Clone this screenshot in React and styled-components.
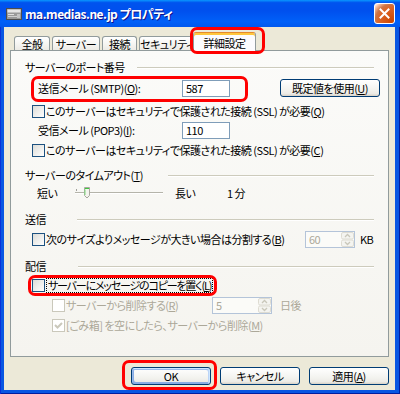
import React from 'react';
import styled, { createGlobalStyle, css } from 'styled-components';

const GlobalStyle = createGlobalStyle`
  html, body { margin: 0; padding: 0; background: #ffffff; }
  body {
    font-family: "Noto Sans CJK JP", "Noto Sans", sans-serif;
    font-size: 11px;
    line-height: 14px;
    letter-spacing: -0.5px;
    color: #000000;
    font-feature-settings: "palt";
  }
  * { box-sizing: border-box; }
`;

const Window = styled.div`
  width: 400px;
  height: 394px;
  display: flex;
  flex-direction: column;
  background: #0856e2;
  box-shadow: inset 1px 0 #0831d9, inset -1px 0 #001ea0, inset 0 -1px #001ea0;
  overflow: hidden;
`;

const TitleBar = styled.div`
  flex: 0 0 27px;
  display: flex;
  align-items: center;
  padding: 0 5px 0 6px;
  background: linear-gradient(180deg, #0997ff 0%, #0053ee 10%, #0050ee 40%, #0060f8 80%, #0058ee 100%);
`;

const Title = styled.span`
  flex: 1;
  margin-left: 3px;
  color: #ffffff;
  font-weight: 700;
  font-size: 12px;
  letter-spacing: -0.5px;
  white-space: nowrap;
  text-shadow: 1px 1px #0f1089;
`;

const CloseButton = styled.div`
  width: 21px;
  height: 21px;
  border: 1px solid #ffffff;
  border-radius: 3px;
  display: flex;
  align-items: center;
  justify-content: center;
  background: radial-gradient(circle at 90% 90%, #cc4600 0, #dc6527 55%, #cd7546 70%, #ffccb2 90%, #fff 100%);
`;

const Glyph = styled.svg`
  display: block;
  flex-shrink: 0;
`;

const Body = styled.div`
  flex: 1;
  margin: 0 5px 4px 4px;
  background: #ece9d8;
  display: flex;
  flex-direction: column;
  padding: 5px 6px 0 6px;
`;

const TabStrip = styled.div`
  flex: 0 0 18px;
  display: flex;
  align-items: flex-end;
  padding-left: 4px;
  position: relative;
  z-index: 2;
`;

const Tab = styled.div`
  width: ${p => p.$w}px;
  height: ${p => (p.$active ? 19 : 14)}px;
  margin-right: ${p => (p.$active ? 0 : 2)}px;
  margin-bottom: ${p => (p.$active ? -1 : 0)}px;
  flex-shrink: 0;
  border: 1px solid #919b9c;
  border-bottom: none;
  border-radius: 3px 3px 0 0;
  background: linear-gradient(180deg, #ffffff 0%, #f7f7f4 45%, #ecebe5 100%);
  display: flex;
  align-items: center;
  justify-content: center;
  white-space: nowrap;
  ${p =>
    p.$active &&
    css`
      border-top: 1px solid #e68b2c;
      box-shadow: inset 0 2px #ffc73c;
      background: #fcfcfe;
      padding-top: 2px;
    `}
`;

const ActiveTabSlot = styled.span`
  margin-left: -4px;
  display: flex;
  align-items: flex-end;
`;

const Panel = styled.div`
  flex: 0 0 307px;
  border: 1px solid #919b9c;
  background: linear-gradient(180deg, #fbfbf9 0%, #f5f4ef 100%);
  padding: 7px 14px 0 14px;
  display: flex;
  flex-direction: column;
  position: relative;
  z-index: 1;
`;

const Row = styled.div`
  display: flex;
  align-items: center;
  height: 18px;
  flex-shrink: 0;
  margin-top: ${p => p.$mt || 0}px;
  padding-left: ${p => p.$indent || 0}px;
  white-space: nowrap;
`;

const HeaderLabel = styled.span`
  flex: 0 0 ${p => p.$w}px;
  min-width: 0;
`;

const Rule = styled.div`
  flex: 1;
  height: 1px;
  background: #cdcbbc;
  box-shadow: 0 1px #ffffff;
`;

const Label = styled.span`
  flex: 0 0 ${p => p.$w}px;
  min-width: 0;
  margin-left: ${p => p.$ml || 0}px;
  color: ${p => (p.$disabled ? '#aca899' : '#000000')};
`;

const CbText = styled.span`
  flex: 0 0 ${p => (p.$w ? `${p.$w}px` : 'auto')};
  min-width: 0;
  color: ${p => (p.$disabled ? '#aca899' : '#000000')};
`;

const Acc = styled.span`
  text-decoration: underline;
  text-underline-offset: 1px;
`;

const Box = styled.span`
  flex: 0 0 13px;
  width: 13px;
  height: 13px;
  margin-right: 1px;
  border: 1px solid ${p => (p.$disabled ? '#cac8bb' : '#1c5180')};
  background: ${p => (p.$disabled ? '#ffffff' : 'linear-gradient(135deg, #dcdcd7 0%, #ffffff 100%)')};
  display: flex;
  align-items: center;
  justify-content: center;
`;

const TextField = styled.span`
  flex: 0 0 ${p => p.$w}px;
  height: 17px;
  border: 1px solid #7f9db9;
  background: #ffffff;
  padding-left: 3px;
  display: flex;
  align-items: center;
`;

const SpinBox = styled.span`
  flex: 0 0 ${p => p.$w}px;
  height: 17px;
  border: 1px solid #b4c4d9;
  background: #fbfbf8;
  padding-left: 3px;
  display: flex;
  align-items: center;
  color: #aca899;
`;

const SpinValue = styled.span`
  flex: 1;
`;

const Unit = styled.span`
  margin-left: ${p => p.$ml || 0}px;
  color: ${p => (p.$disabled ? '#aca899' : '#000000')};
`;

const Button = styled.div`
  flex: 0 0 ${p => p.$w || 80}px;
  width: ${p => p.$w || 80}px;
  height: 18px;
  margin-left: ${p => p.$ml || 0}px;
  border: 1px solid #003c74;
  border-radius: 3px;
  background: linear-gradient(180deg, #ffffff 0%, #f3f3ef 60%, #ecebe6 86%, #d6d0c5 100%);
  display: flex;
  align-items: center;
  justify-content: center;
  white-space: nowrap;
  ${p =>
    p.$default &&
    css`
      box-shadow: inset -1px 1px #cee7ff, inset 1px 2px #98b8ea, inset -2px 2px #bcd4f6, inset 1px -1px #89ade4,
        inset 2px -2px #89ade4;
    `}
`;

const ButtonRow = styled.div`
  display: flex;
  justify-content: flex-end;
  gap: 9px;
  margin-top: 10px;
`;

const Highlight = styled.span`
  position: relative;
  display: inline-flex;
  align-items: center;
  flex-shrink: 0;
  &::after {
    content: '';
    position: absolute;
    top: ${p => p.$t}px;
    right: ${p => p.$r}px;
    bottom: ${p => p.$b}px;
    left: ${p => p.$l}px;
    border: 3px solid #ff0000;
    border-radius: 7px;
    pointer-events: none;
    z-index: 5;
  }
`;

const Focus = styled.span`
  border: 1px dotted #000000;
  padding: 0 1px;
  line-height: 13px;
  letter-spacing: -1.2px;
`;

const CheckBox = ({ disabled, checked }) => (
  <Box $disabled={disabled}>
    {checked && (
      <Glyph width="9" height="9" viewBox="0 0 9 9">
        <path d="M1 4 L3.5 6.5 L8 2" fill="none" stroke={disabled ? '#cac8bb' : '#21a121'} strokeWidth="2" />
      </Glyph>
    )}
  </Box>
);

const SpinArrows = () => (
  <Glyph width="13" height="15" viewBox="0 0 13 15">
    <rect x="0.5" y="0.5" width="12" height="6.5" rx="1.5" fill="#f4f4f0" stroke="#dedcd2" />
    <rect x="0.5" y="8" width="12" height="6.5" rx="1.5" fill="#f4f4f0" stroke="#dedcd2" />
    <path d="M4 5 L6.5 2.5 L9 5" fill="none" stroke="#c9c7ba" strokeWidth="1.3" />
    <path d="M4 10 L6.5 12.5 L9 10" fill="none" stroke="#c9c7ba" strokeWidth="1.3" />
  </Glyph>
);

const Spin = ({ w, value }) => (
  <SpinBox $w={w}>
    <SpinValue>{value}</SpinValue>
    <SpinArrows />
  </SpinBox>
);

const Slider = () => (
  <Glyph width="88" height="14" viewBox="0 0 88 14">
    <line x1="0" y1="6.5" x2="88" y2="6.5" stroke="#b5b4aa" />
    <line x1="0" y1="7.5" x2="88" y2="7.5" stroke="#ffffff" />
    <line x1="1.5" y1="3" x2="1.5" y2="5" stroke="#a0a09a" />
    <path d="M9.5 1.5 H14.5 V9.5 L12 12 L9.5 9.5 Z" fill="#f4f4ee" stroke="#a8a79e" />
    <line x1="10" y1="2.5" x2="14" y2="2.5" stroke="#3ec93e" />
    <line x1="10" y1="3.5" x2="10" y2="9" stroke="#7fdc7f" />
  </Glyph>
);

const AppIcon = () => (
  <Glyph width="16" height="15" viewBox="0 0 16 15">
    <rect x="0.5" y="2.5" width="15" height="11" fill="#9a9a9a" stroke="#4d4d4d" />
    <rect x="1.5" y="3.5" width="13" height="3" fill="#e6e6e6" />
    <rect x="2" y="8" width="6" height="1" fill="#e0e0e0" />
    <rect x="2" y="10" width="9" height="1" fill="#d0d0d0" />
    <rect x="11" y="8" width="3" height="4" fill="#c4c4c4" />
  </Glyph>
);

const CloseIcon = () => (
  <Glyph width="11" height="11" viewBox="0 0 11 11">
    <path d="M1.5 1.5 L9.5 9.5 M9.5 1.5 L1.5 9.5" stroke="#ffffff" strokeWidth="2" strokeLinecap="square" />
  </Glyph>
);

export default function App() {
  return (
    <>
      <GlobalStyle />
      <Window>
        <TitleBar>
          <AppIcon />
          <Title>ma.medias.ne.jp プロパティ</Title>
          <CloseButton>
            <CloseIcon />
          </CloseButton>
        </TitleBar>
        <Body>
          <TabStrip>
            <Tab $w={36}>全般</Tab>
            <Tab $w={48}>サーバー</Tab>
            <Tab $w={35}>接続</Tab>
            <Tab $w={56}>セキュリティ</Tab>
            <ActiveTabSlot>
              <Highlight $t={-5} $r={-9} $b={-4} $l={-3}>
                <Tab $w={63} $active>
                  詳細設定
                </Tab>
              </Highlight>
            </ActiveTabSlot>
          </TabStrip>
          <Panel>
            <Row>
              <HeaderLabel $w={112}>サーバーのポート番号</HeaderLabel>
              <Rule />
            </Row>
            <Row $mt={3} $indent={13}>
              <Highlight $t={-4} $r={-18} $b={-5} $l={-7}>
                <Label $w={144}>
                  送信メール (SMTP)(<Acc>O</Acc>):
                </Label>
                <TextField $w={48}>587</TextField>
              </Highlight>
              <Button $w={100} $ml={50}>
                既定値を使用(<Acc>U</Acc>)
              </Button>
            </Row>
            <Row $mt={5} $indent={7}>
              <CheckBox />
              <CbText>
                このサーバーはセキュリティで保護された接続 (SSL) が必要(<Acc>Q</Acc>)
              </CbText>
            </Row>
            <Row $mt={1} $indent={13}>
              <Label $w={144}>
                受信メール (POP3)(<Acc>I</Acc>):
              </Label>
              <TextField $w={48}>110</TextField>
            </Row>
            <Row $mt={2} $indent={7}>
              <CheckBox />
              <CbText>
                このサーバーはセキュリティで保護された接続 (SSL) が必要(<Acc>C</Acc>)
              </CbText>
            </Row>
            <Row $mt={7}>
              <HeaderLabel $w={143}>
                サーバーのタイムアウト(<Acc>T</Acc>)
              </HeaderLabel>
              <Rule />
            </Row>
            <Row $indent={12}>
              <Label $w={38}>短い</Label>
              <Slider />
              <Label $w={52} $ml={12}>
                長い
              </Label>
              <span>1 分</span>
            </Row>
            <Row $mt={8}>
              <HeaderLabel $w={52}>送信</HeaderLabel>
              <Rule />
            </Row>
            <Row $mt={2} $indent={7}>
              <CheckBox />
              <CbText $w={259}>
                次のサイズよりメッセージが大きい場合は分割する(<Acc>B</Acc>)
              </CbText>
              <Spin w={50} value="60" />
              <Unit $ml={5}>KB</Unit>
            </Row>
            <Row $mt={9}>
              <HeaderLabel $w={53}>配信</HeaderLabel>
              <Rule />
            </Row>
            <Row $mt={1} $indent={7}>
              <Highlight $t={-3} $r={-4} $b={-3} $l={-4}>
                <CheckBox />
                <Focus>
                  サーバーにメッセージのコピーを置く(<Acc>L</Acc>)
                </Focus>
              </Highlight>
            </Row>
            <Row $mt={2} $indent={27}>
              <CheckBox disabled />
              <CbText $w={146} $disabled>
                サーバーから削除する(<Acc>R</Acc>)
              </CbText>
              <Spin w={60} value="5" />
              <Unit $ml={8} $disabled>
                日後
              </Unit>
            </Row>
            <Row $mt={2} $indent={27}>
              <CheckBox disabled checked />
              <CbText $disabled>
                [ごみ箱] を空にしたら、サーバーから削除(<Acc>M</Acc>)
              </CbText>
            </Row>
          </Panel>
          <ButtonRow>
            <Highlight $t={-7} $r={-6} $b={-5} $l={-9}>
              <Button $default>OK</Button>
            </Highlight>
            <Button>キャンセル</Button>
            <Button>
              適用(<Acc>A</Acc>)
            </Button>
          </ButtonRow>
        </Body>
      </Window>
    </>
  );
}
